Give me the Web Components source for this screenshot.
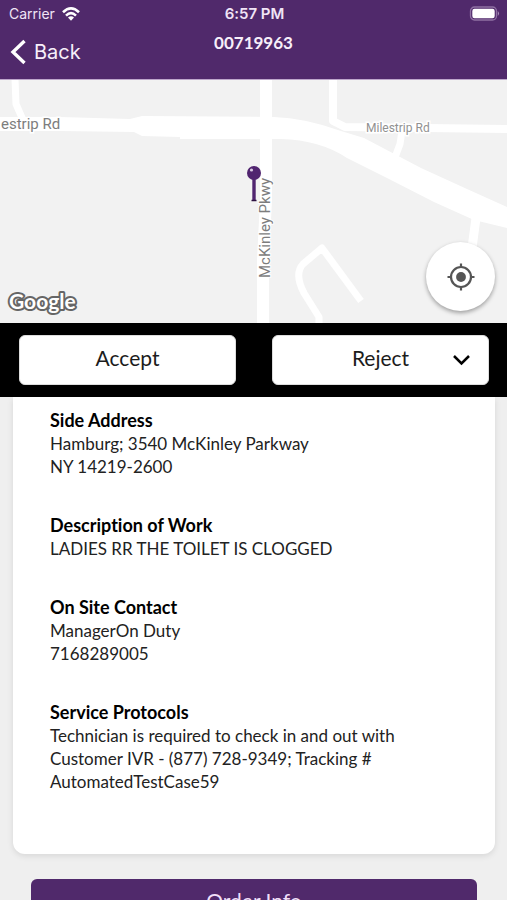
<!DOCTYPE html>
<html lang="en">
<head>
<meta charset="utf-8">
<meta name="viewport" content="width=device-width, initial-scale=1">
<title>Work order 00719963</title>
<style>
  html, body { margin: 0; height: 100%; }
  body { font-family: Lato, "Open Sans", sans-serif; font-variant-ligatures: none; color: #000; background: #efefef; }
</style>
</head>
<body>
<work-order-app>
  <status-bar slot="top" carrier="Carrier" time="6:57 PM"></status-bar>
  <nav-header slot="top" heading="00719963">Back</nav-header>
  <site-map slot="top"></site-map>
  <action-bar slot="top"></action-bar>
  <detail-card>
    <detail-item label="Side Address">Hamburg; 3540 McKinley Parkway<br>NY 14219-2600</detail-item>
    <detail-item label="Description of Work">LADIES RR THE TOILET IS CLOGGED</detail-item>
    <detail-item label="On Site Contact">ManagerOn Duty<br>7168289005</detail-item>
    <detail-item label="Service Protocols">Technician is required to check in and out with<br>Customer IVR - (877) 728-9349; Tracking #<br>AutomatedTestCase59</detail-item>
  </detail-card>
  <primary-button>Order Info</primary-button>
</work-order-app>

<script>
const define = (name, html, setup) => {
  const template = document.createElement('template');
  template.innerHTML = html;
  customElements.define(name, class extends HTMLElement {
    constructor() {
      super();
      this.attachShadow({ mode: 'open' }).append(template.content.cloneNode(true));
    }
    connectedCallback() { if (setup) setup(this, this.shadowRoot); }
  });
};

define('work-order-app', `
  <style>
    :host { display: flex; flex-direction: column; height: 100vh; overflow: hidden; }
    .top { flex: none; }
    main { flex: 1; min-height: 0; overflow-y: auto; scrollbar-width: none; padding: 0 12px 24px 13px; }
  </style>
  <div class="top"><slot name="top"></slot></div>
  <main><slot></slot></main>`);

define('status-bar', `
  <style>
    :host { display: grid; grid-template-columns: 1fr auto 1fr; align-items: center; height: 27px;
      padding: 0 7px 0 9px; background: #50296b; color: #f0e4f6;
      font-family: Inter, Roboto, sans-serif; font-size: 14px; }
    .carrier { display: flex; align-items: center; gap: 7px; }
    .time { font-size: 15px; font-weight: 600; }
    .battery { justify-self: end; }
    svg { display: block; }
  </style>
  <span class="carrier"><span id="carrier"></span>
    <svg width="18" height="14" viewBox="0 0 18 14" aria-hidden="true">
      <g fill="none" stroke="#fff" stroke-width="2.6">
        <path d="M1 5.2 Q9 -2.4 17 5.2"/><path d="M4 8.6 Q9 3.8 14 8.6"/>
      </g>
      <path d="M6 10.6 Q9 8 12 10.6 L9 13.8Z" fill="#fff"/>
    </svg></span>
  <span class="time" id="time"></span>
  <svg class="battery" width="31" height="15" viewBox="0 0 31 15" role="img" aria-label="Battery full">
    <rect x="1.500" y="1" width="26" height="13" rx="4" fill="none" stroke="#8f70a3" stroke-width="1.3"/>
    <rect x="3.300" y="2.8" width="22.4" height="9.4" rx="2.2" fill="#fff"/>
    <path d="M28.800 5 Q31.200 7.5 28.800 10Z" fill="#a98fba"/>
  </svg>`, (el, root) => {
    root.getElementById('carrier').textContent = el.getAttribute('carrier');
    root.getElementById('time').textContent = el.getAttribute('time');
  });

define('nav-header', `
  <style>
    :host { display: grid; grid-template-columns: 1fr auto 1fr; align-items: start; height: 53px;
      padding: 0 10px; background: #50296b; color: #f7effa; border-bottom: 1px solid #bda6cb; box-sizing: border-box; }
    a { display: flex; align-items: center; justify-self: start; gap: 7px; margin-top: 10px;
      color: inherit; text-decoration: none; font: 20px/30px Inter, Roboto, sans-serif; }
    h1 { margin: 5px 0 0; font-size: 17px; line-height: 22px; font-weight: 700; }
  </style>
  <a href="#orders">
    <svg width="17" height="26" viewBox="0 0 17 26" aria-hidden="true">
      <path d="M14.5 2 L3 13 L14.5 24" fill="none" stroke="#fff" stroke-width="3.4"/>
    </svg><slot></slot></a>
  <h1></h1>`, (el, root) => { root.querySelector('h1').textContent = el.getAttribute('heading'); });

define('site-map', `
  <style>
    :host { display: block; position: relative; height: 243px; background: #f2f2f2; overflow: hidden; }
    .map { display: block; width: 100%; height: 100%; }
    button { position: absolute; right: 12px; bottom: 12px; width: 69px; height: 69px; padding: 0;
      display: grid; place-items: center; border: 0; border-radius: 50%; background: #fff;
      box-shadow: 0 2px 4px rgba(0,0,0,.35); }
  </style>
  <svg class="map" viewBox="0 80 507 243" preserveAspectRatio="xMidYMid slice" role="img" aria-label="Map of McKinley Pkwy and Milestrip Rd">
    <g fill="none" stroke="#fff" stroke-width="7" stroke-linejoin="round">
      <path d="M15 79 L16 104 L23 120"/>
      <path d="M333 79 V121 L345 127 L507 129" stroke-width="8"/>
      <path d="M402 131 L400 144 L394 160"/>
      <path d="M476 218 L472 248" stroke-width="9"/>
      <path d="M319 325 V317 L304 293 Q294 274 303 264 L322 248 L361 301"/>
      <path d="M266 79 V200 L263 260 V325" stroke-width="12"/>
    </g>
    <path fill="#fff" d="M0 117 H60 L130 119 L142 116 L274 117 Q305 118 341 131 L364 138 L421 168 L467 189 L507 207 V228 L474 220 L434 202 L387 178 L347 158 Q320 140 281 139 H180 V137 L142 136 L134 132 L60 131 H0Z"/>
    <g fill="#7d7d7d" font-family="Roboto, sans-serif">
      <text x="1" y="129" font-size="15" stroke="#fff" stroke-width="3" paint-order="stroke">estrip Rd</text>
      <text x="366" y="132" font-size="12" fill="#919191" stroke="#fff" stroke-width="3" paint-order="stroke">Milestrip Rd</text>
      <text transform="translate(270 278) rotate(-90)" font-size="15" stroke="#fff" stroke-width="2" paint-order="stroke">McKinley Pkwy</text>
    </g>
    <path d="M254 178 V201" stroke="#50246f" stroke-width="3.400"/>
    <path d="M251.500 200.500 H256.500" stroke="#2c1040" stroke-width="1.500"/>
    <circle cx="254" cy="173" r="7" fill="#50246f"/>
    <circle cx="251.500" cy="170" r="1.600" fill="#d8c8e2"/>
    <text x="9" y="309" font-family="Lato, sans-serif" font-size="21" font-weight="700" fill="#fff" stroke="#666" stroke-width="4" stroke-linejoin="round" paint-order="stroke">Google</text>
  </svg>
  <button type="button" aria-label="Center on my location">
    <svg width="28" height="28" viewBox="0 0 28 28" aria-hidden="true">
      <circle cx="14" cy="14" r="10" fill="none" stroke="#555" stroke-width="2.200"/>
      <circle cx="14" cy="14" r="4.900" fill="#555"/>
      <path d="M14 .5V5 M14 23v4.500 M.5 14H5 M23 14h4.500" stroke="#555" stroke-width="2.200"/>
    </svg>
  </button>`);

define('action-bar', `
  <style>
    :host { display: grid; grid-template-columns: 1fr 1fr; gap: 36px; padding: 12px 18px 12px 19px; background: #000; }
    button, select { width: 100%; height: 50px; margin: 0; padding: 0 0 4px; border: 1px solid #ddd; border-radius: 6px;
      background: #fff; color: #1c1c1c; font: 21px/24px Lato, sans-serif; text-align: center; text-align-last: center;
      appearance: none; box-sizing: border-box; }
    .pick { position: relative; }
    svg { position: absolute; right: 18px; top: 18px; pointer-events: none; }
  </style>
  <button type="button">Accept</button>
  <div class="pick">
    <select aria-label="Reject"><option>Reject</option></select>
    <svg width="19" height="14" viewBox="0 0 19 14" aria-hidden="true">
      <path d="M2 3 L9.500 10.500 L17 3" fill="none" stroke="#000" stroke-width="2.500"/>
    </svg>
  </div>`);

define('detail-card', `
  <style>
    :host { display: flex; flex-direction: column; gap: 35px; padding: 11px 37px 61px; background: #fff;
      border-radius: 0 0 12px 12px; box-shadow: 0 2px 6px rgba(0,0,0,.1); }
  </style>
  <slot></slot>`);

define('detail-item', `
  <style>
    :host { display: block; font-size: 17px; }
    h2 { margin: 0; font-size: 18px; line-height: 24px; font-weight: 700; }
    p { margin: 0; line-height: 23px; color: #222; }
  </style>
  <h2></h2><p><slot></slot></p>`, (el, root) => { root.querySelector('h2').textContent = el.getAttribute('label'); });

define('primary-button', `
  <style>
    :host { display: block; margin: 25px 18px 0; }
    button { display: block; width: 100%; height: 50px; padding: 0 0 6px; border: 0; border-radius: 6px;
      background: #50296b; color: #f0dff8; font: 21px/24px Lato, sans-serif; }
  </style>
  <button type="button"><slot></slot></button>`);
</script>
</body>
</html>
